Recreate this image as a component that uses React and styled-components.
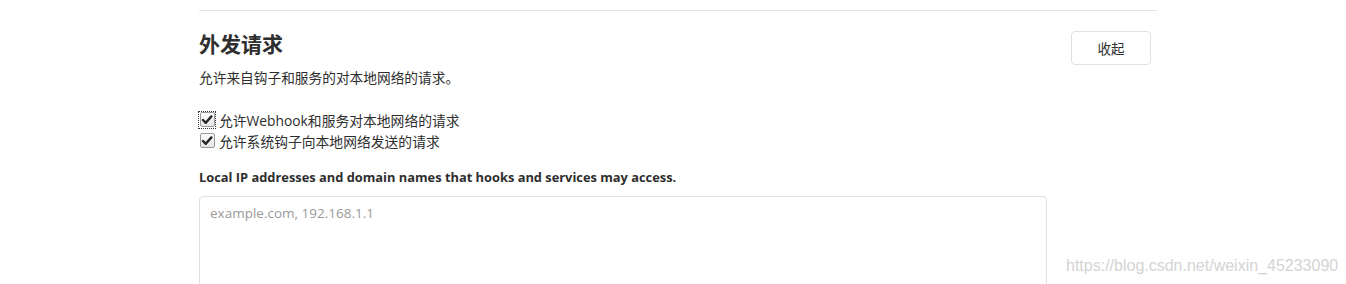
import React, { useState } from 'react'
import styled, { createGlobalStyle } from 'styled-components'

const GlobalStyle = createGlobalStyle`
  body {
    margin: 0;
    background: #fff;
    font-family: "Open Sans", "Noto Sans CJK SC", sans-serif;
    color: #2e2e2e;
  }
`

function CheckRow({ label, focused }) {
  const [checked, setChecked] = useState(true)
  return (
    <Row onClick={() => setChecked(!checked)}>
      <Box focused={focused}>
        <Tick>
          {checked && (
            <svg width="12" height="12" viewBox="0 0 12 12">
              <path d="M2 6 L4.8 8.8 L10.4 2.4" fill="none" stroke="#262626" strokeWidth="2.4" strokeLinecap="round" strokeLinejoin="round" />
            </svg>
          )}
        </Tick>
      </Box>
      <span>{label}</span>
    </Row>
  )
}

function App() {
  return (
    <Page>
      <GlobalStyle />
      <Section>
        <Header>
          <div>
            <Title>外发请求</Title>
            <Desc>允许来自钩子和服务的对本地网络的请求。</Desc>
          </div>
          <CollapseButton>收起</CollapseButton>
        </Header>
        <Checks>
          <CheckRow focused label="允许Webhook和服务对本地网络的请求" />
          <CheckRow label="允许系统钩子向本地网络发送的请求" />
        </Checks>
        <FieldLabel>Local IP addresses and domain names that hooks and services may access.</FieldLabel>
        <TextArea placeholder="example.com, 192.168.1.1" />
      </Section>
      <Watermark>https://blog.csdn.net/weixin_45233090</Watermark>
    </Page>
  )
}

export default App

const Page = styled.div`
  position: relative;
  height: 284px;
  overflow: hidden;
  padding: 10px 0 0 199px;
  box-sizing: border-box;
`

const Section = styled.div`
  width: 958px;
  border-top: 1px solid #e5e5e5;
`

const Header = styled.div`
  display: flex;
  justify-content: space-between;
  align-items: flex-start;
  padding-right: 6px;
`

const Title = styled.h4`
  margin: 20px 0 0;
  font-family: "Noto Sans CJK SC", sans-serif;
  font-size: 21px;
  line-height: 24px;
  font-weight: 700;
  color: #2e2e2e;
`

const Desc = styled.p`
  margin: 12px 0 0;
  font-family: "Noto Sans CJK SC", sans-serif;
  font-size: 13.7px;
  line-height: 20px;
  color: #2e2e2e;
`

const CollapseButton = styled.button`
  margin-top: 20px;
  width: 80px;
  height: 34px;
  background: #fff;
  border: 1px solid #e0e0e0;
  border-radius: 4px;
  font-family: "Noto Sans CJK SC", sans-serif;
  font-size: 13.5px;
  color: #2e2e2e;
  cursor: pointer;
`

const Checks = styled.div`
  margin-top: 22px;
  display: flex;
  flex-direction: column;
`

const Row = styled.label`
  display: flex;
  align-items: center;
  gap: 4px;
  height: 21px;
  font-size: 13.8px;
  color: #2e2e2e;
  cursor: pointer;
`

const Box = styled.span`
  width: 16px;
  height: 16px;
  box-sizing: border-box;
  display: flex;
  align-items: center;
  justify-content: center;
  outline: ${p => (p.focused ? '1px dotted #333' : 'none')};
`

const Tick = styled.span`
  width: 15px;
  height: 15px;
  box-sizing: border-box;
  border: 1px solid #9a9a9a;
  border-radius: 2px;
  background: linear-gradient(#fdfdfd, #e6e6e6);
  display: flex;
  align-items: center;
  justify-content: center;
`

const FieldLabel = styled.div`
  margin-top: 16px;
  font-family: "Open Sans", sans-serif;
  font-size: 12.85px;
  font-weight: 700;
  line-height: 20px;
  color: #2e2e2e;
`

const TextArea = styled.textarea`
  display: block;
  margin-top: 9px;
  width: 848px;
  height: 110px;
  box-sizing: border-box;
  padding: 6px 10px;
  border: 1px solid #e0e0e0;
  border-radius: 4px;
  font-family: "Open Sans", sans-serif;
  font-size: 13.5px;
  line-height: 20px;
  resize: none;
  outline: none;
  &::placeholder {
    color: #9a9a9a;
  }
`

const Watermark = styled.div`
  position: absolute;
  left: 1066px;
  top: 256px;
  font-family: "Liberation Sans", Arial, sans-serif;
  font-size: 16px;
  line-height: 20px;
  color: #d4d4d4;
  white-space: nowrap;
`
